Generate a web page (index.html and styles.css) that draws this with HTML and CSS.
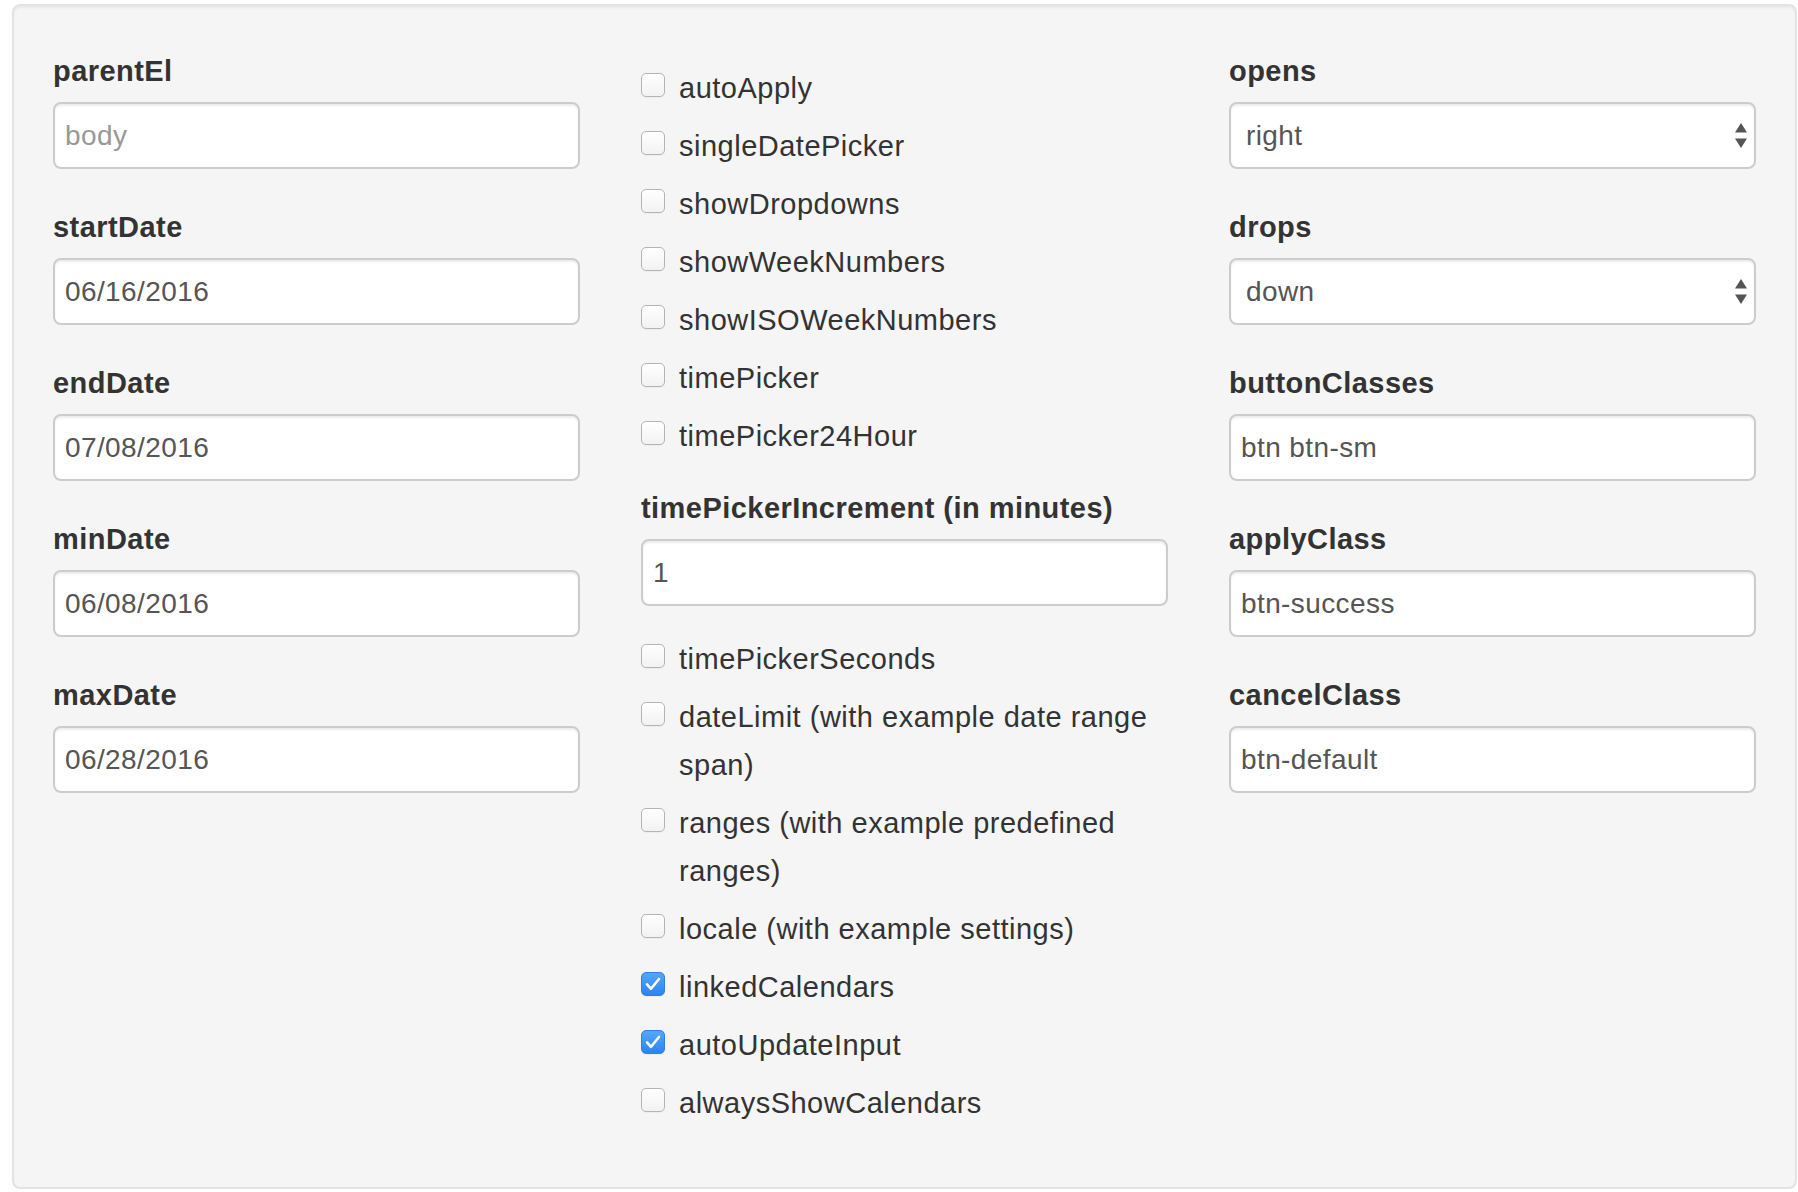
FILE: index.html
```html
<!DOCTYPE html>
<html lang="en">
<head>
<meta charset="utf-8">
<title>Options</title>
<link rel="stylesheet" href="styles.css">
</head>
<body>
<div class="well">
  <div class="cols">
    <div class="col">
      <div class="group"><label class="lbl">parentEl</label><input class="field" type="text" placeholder="body"></div>
      <div class="group"><label class="lbl">startDate</label><input class="field" type="text" value="06/16/2016"></div>
      <div class="group"><label class="lbl">endDate</label><input class="field" type="text" value="07/08/2016"></div>
      <div class="group"><label class="lbl">minDate</label><input class="field" type="text" value="06/08/2016"></div>
      <div class="group"><label class="lbl">maxDate</label><input class="field" type="text" value="06/28/2016"></div>
    </div>
    <div class="col col-mid">
      <label class="check"><span class="box"></span><span class="txt">autoApply</span></label>
      <label class="check"><span class="box"></span><span class="txt">singleDatePicker</span></label>
      <label class="check"><span class="box"></span><span class="txt">showDropdowns</span></label>
      <label class="check"><span class="box"></span><span class="txt">showWeekNumbers</span></label>
      <label class="check"><span class="box"></span><span class="txt">showISOWeekNumbers</span></label>
      <label class="check"><span class="box"></span><span class="txt">timePicker</span></label>
      <label class="check"><span class="box"></span><span class="txt">timePicker24Hour</span></label>
      <div class="group mid-group"><label class="lbl">timePickerIncrement (in minutes)</label><input class="field" type="text" value="1"></div>
      <label class="check"><span class="box"></span><span class="txt">timePickerSeconds</span></label>
      <label class="check"><span class="box"></span><span class="txt">dateLimit (with example date range span)</span></label>
      <label class="check"><span class="box"></span><span class="txt">ranges (with example predefined ranges)</span></label>
      <label class="check"><span class="box"></span><span class="txt">locale (with example settings)</span></label>
      <label class="check"><span class="box on"><svg viewBox="0 0 24 24" width="24" height="24"><path d="M6 12.4 L10 16.8 L18 7" fill="none" stroke="#fff" stroke-width="2.6" stroke-linecap="round" stroke-linejoin="round"/></svg></span><span class="txt">linkedCalendars</span></label>
      <label class="check"><span class="box on"><svg viewBox="0 0 24 24" width="24" height="24"><path d="M6 12.4 L10 16.8 L18 7" fill="none" stroke="#fff" stroke-width="2.6" stroke-linecap="round" stroke-linejoin="round"/></svg></span><span class="txt">autoUpdateInput</span></label>
      <label class="check"><span class="box"></span><span class="txt">alwaysShowCalendars</span></label>
    </div>
    <div class="col">
      <div class="group"><label class="lbl">opens</label>
        <div class="sel-wrap">
          <select class="field sel"><option>right</option><option>left</option><option>center</option></select>
          <svg class="arrows" viewBox="0 0 12 25" width="12" height="25"><path d="M6 0 L12 9.5 L0 9.5 Z M0 15.5 L12 15.5 L6 25 Z" fill="#555"/></svg>
        </div>
      </div>
      <div class="group"><label class="lbl">drops</label>
        <div class="sel-wrap">
          <select class="field sel"><option>down</option><option>up</option></select>
          <svg class="arrows" viewBox="0 0 12 25" width="12" height="25"><path d="M6 0 L12 9.5 L0 9.5 Z M0 15.5 L12 15.5 L6 25 Z" fill="#555"/></svg>
        </div>
      </div>
      <div class="group"><label class="lbl">buttonClasses</label><input class="field" type="text" value="btn btn-sm"></div>
      <div class="group"><label class="lbl">applyClass</label><input class="field" type="text" value="btn-success"></div>
      <div class="group"><label class="lbl">cancelClass</label><input class="field" type="text" value="btn-default"></div>
    </div>
  </div>
</div>
</body>
</html>
```
FILE: styles.css
```css
body {
  margin: 0;
  background: #fff;
  font-family: "Liberation Sans", Arial, sans-serif;
  color: #333;
}

.well {
  margin: 4px 0 0 12px;
  width: 1785px;
  box-sizing: border-box;
  border: 2px solid #e3e3e3;
  border-radius: 8px;
  background: #f5f5f5;
  box-shadow: inset 0 2px 2px rgba(0, 0, 0, 0.05);
  padding: 45px 37px 50px 39px;
}

.cols {
  display: grid;
  grid-template-columns: repeat(3, 527px);
  column-gap: 61px;
  align-items: start;
}

.group {
  margin-bottom: 38px;
}

.lbl {
  display: block;
  font-weight: bold;
  font-size: 29px;
  line-height: 40px;
  letter-spacing: 0.45px;
  margin-bottom: 11px;
  color: #333;
}

.field {
  display: block;
  width: 100%;
  height: 67px;
  box-sizing: border-box;
  margin: 0;
  border: 2px solid #ccc;
  border-radius: 8px;
  background: #fff;
  box-shadow: inset 0 2px 2px rgba(0, 0, 0, 0.075);
  padding: 0 10px;
  font-family: "Liberation Sans", Arial, sans-serif;
  font-size: 28px;
  letter-spacing: 0.4px;
  color: #555;
  outline: none;
}

.field::placeholder {
  color: #999;
}

.sel-wrap {
  display: grid;
}

.sel-wrap > * {
  grid-area: 1 / 1;
}

.sel {
  appearance: none;
  -webkit-appearance: none;
  padding-left: 15px;
}

.arrows {
  justify-self: end;
  align-self: start;
  margin: 21px 9px 0 0;
  pointer-events: none;
}

.col-mid {
  padding-top: 13px;
}

.check {
  display: flex;
  align-items: flex-start;
  margin-bottom: 10px;
}

.box {
  flex: none;
  width: 24px;
  height: 24px;
  box-sizing: border-box;
  margin-top: 9px;
  margin-right: 14px;
  border: 1px solid #b4b4b4;
  border-radius: 5px;
  background: linear-gradient(#ffffff, #f2f2f2);
  box-shadow: 0 1px 0 rgba(0, 0, 0, 0.03);
  overflow: hidden;
}

.box svg {
  display: block;
  margin: -1px;
}

.box.on {
  border-color: #2e80e8;
  background: linear-gradient(#55a6fa, #2c84f3);
}

.txt {
  font-size: 29px;
  line-height: 48px;
  letter-spacing: 0.5px;
  color: #333;
}

.mid-group {
  margin-top: 28px;
  margin-bottom: 29px;
}
```
